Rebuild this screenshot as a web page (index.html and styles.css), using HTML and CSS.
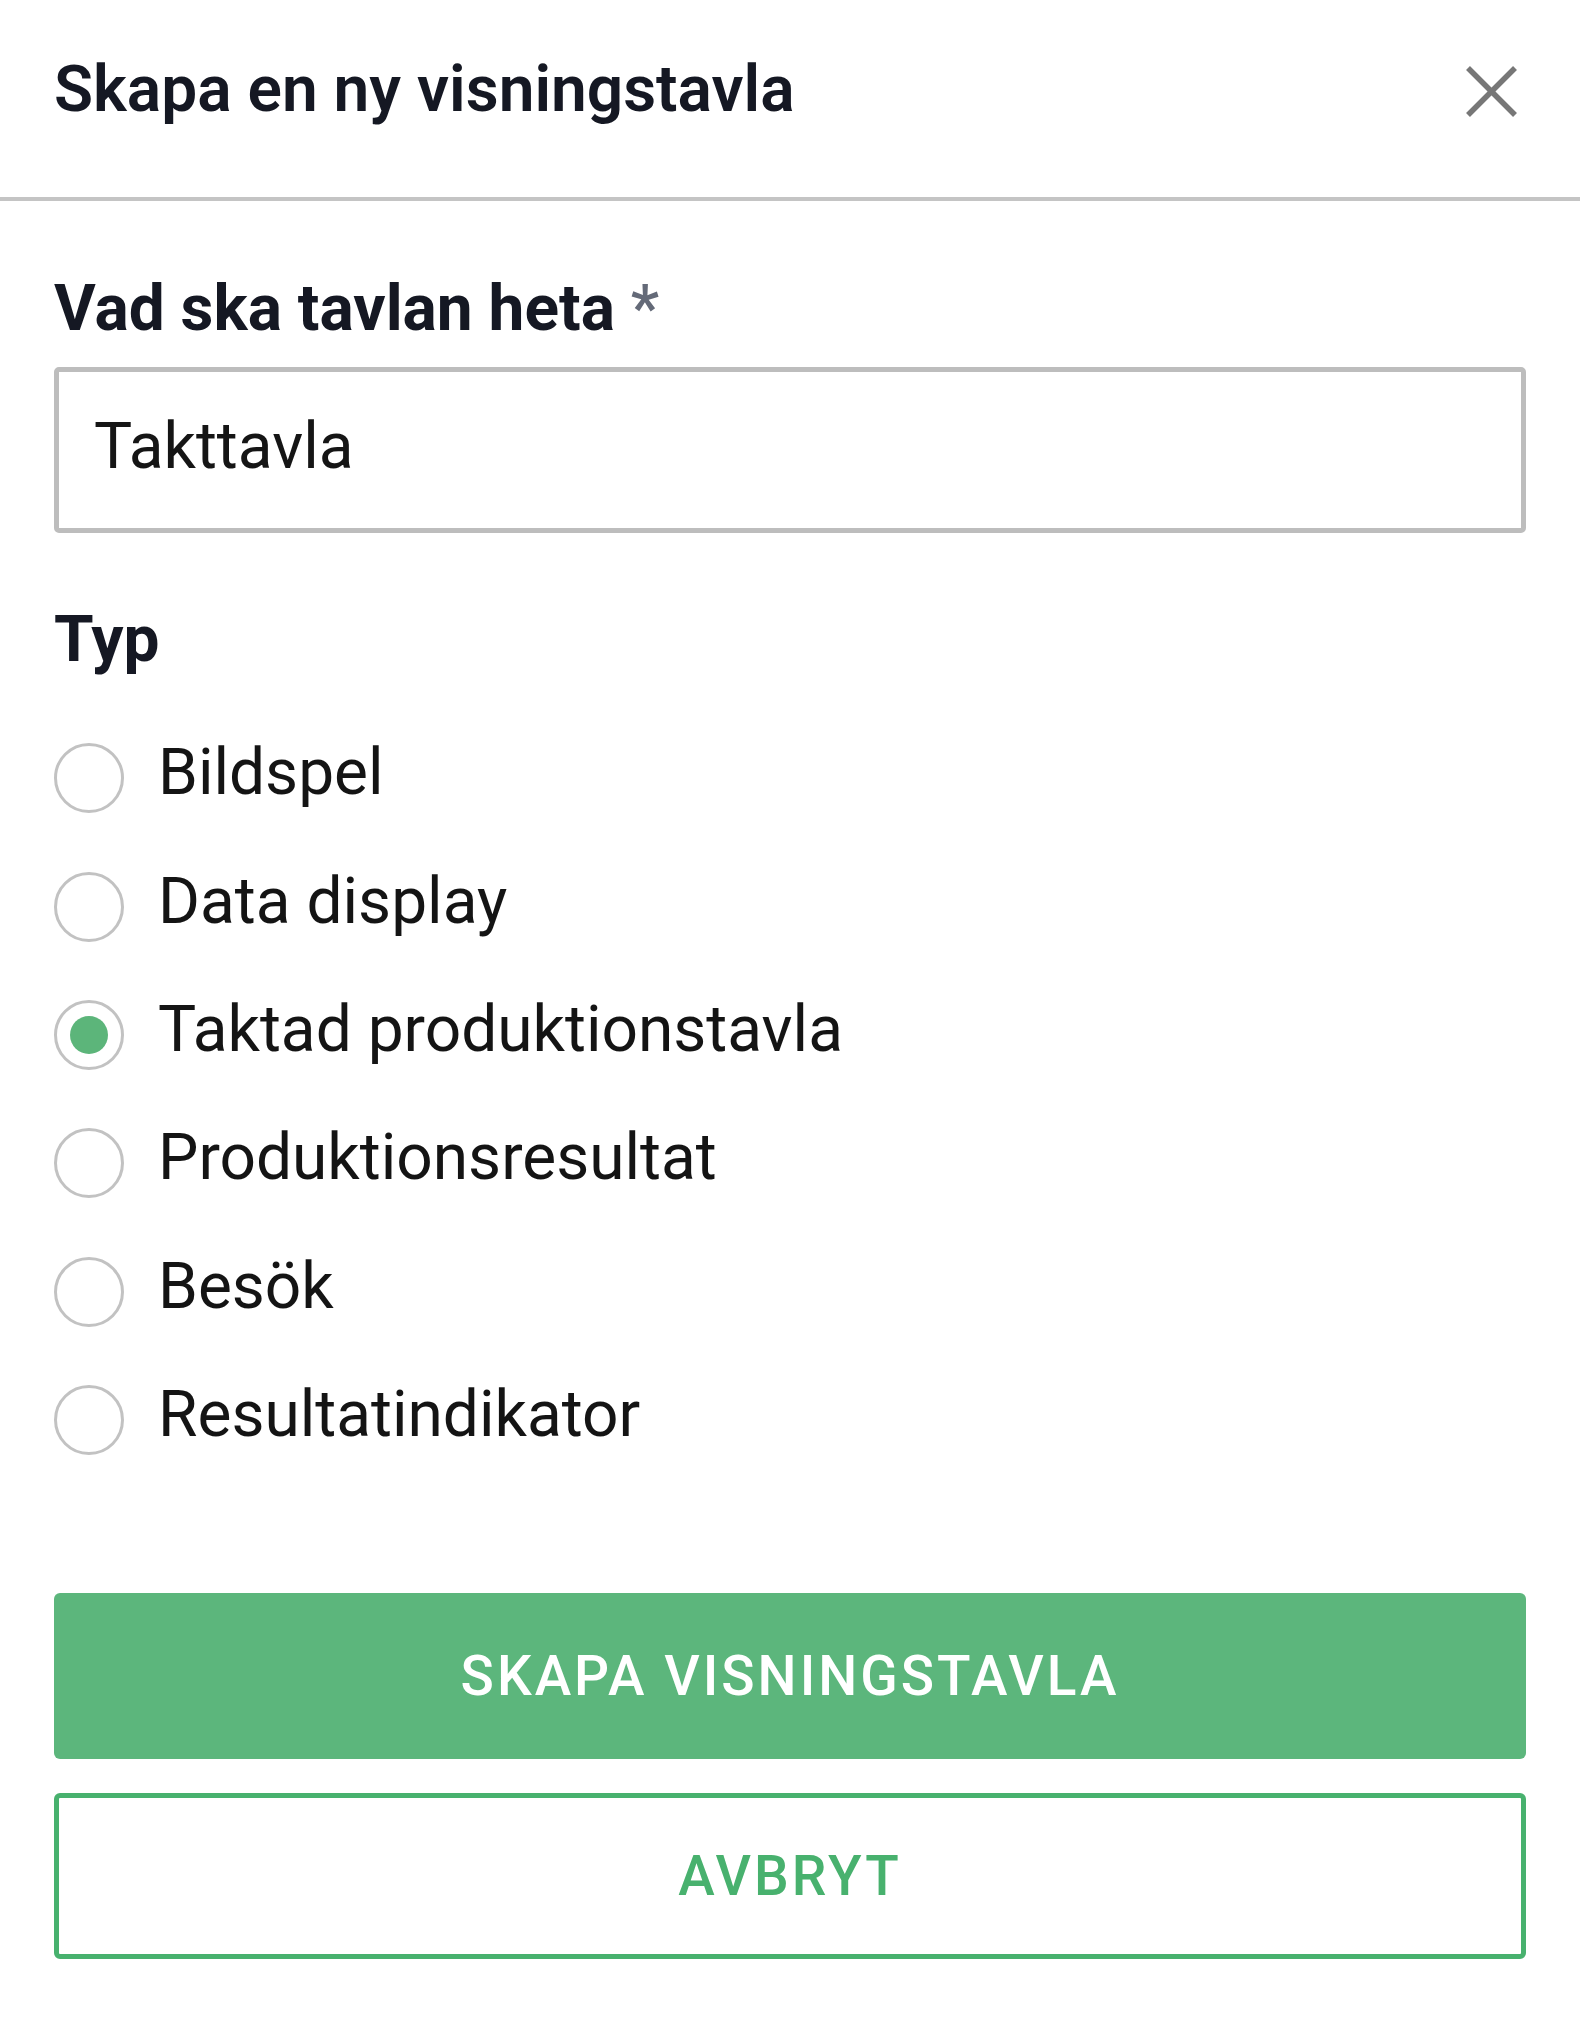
FILE: index.html
```html
<!DOCTYPE html>
<html lang="sv">
<head>
<meta charset="utf-8">
<title>Skapa en ny visningstavla</title>
<link rel="stylesheet" href="styles.css">
</head>
<body>
<div class="dialog">
  <header class="dialog-header">
    <h1 class="dialog-title">Skapa en ny visningstavla</h1>
    <button class="close-btn" type="button" aria-label="Stäng">
      <svg width="53" height="53" viewBox="0 0 53 53" aria-hidden="true">
        <line x1="3" y1="3" x2="50" y2="50" />
        <line x1="50" y1="3" x2="3" y2="50" />
      </svg>
    </button>
  </header>
  <form class="dialog-body">
    <label class="field-label" for="name">Vad ska tavlan heta <span class="required">*</span></label>
    <input class="text-input" id="name" type="text" value="Takttavla">

    <div class="section-label">Typ</div>
    <div class="radio-group">
      <label class="radio-row"><input class="radio" type="radio" name="typ"><span class="radio-text">Bildspel</span></label>
      <label class="radio-row"><input class="radio" type="radio" name="typ"><span class="radio-text">Data display</span></label>
      <label class="radio-row"><input class="radio" type="radio" name="typ" checked><span class="radio-text">Taktad produktionstavla</span></label>
      <label class="radio-row"><input class="radio" type="radio" name="typ"><span class="radio-text">Produktionsresultat</span></label>
      <label class="radio-row"><input class="radio" type="radio" name="typ"><span class="radio-text">Besök</span></label>
      <label class="radio-row"><input class="radio" type="radio" name="typ"><span class="radio-text">Resultatindikator</span></label>
    </div>

    <div class="actions">
      <button class="btn btn-primary" type="button">Skapa visningstavla</button>
      <button class="btn btn-outline" type="button">Avbryt</button>
    </div>
  </form>
</div>
</body>
</html>
```

FILE: styles.css
```css
* {
  box-sizing: border-box;
}

html, body {
  margin: 0;
  padding: 0;
  background: #ffffff;
}

body {
  font-family: Roboto, "Liberation Sans", Arial, sans-serif;
  color: #14171f;
}

.dialog {
  width: 1580px;
}

.dialog-header {
  display: flex;
  justify-content: space-between;
  align-items: flex-start;
  padding: 54px 62px 71px 54px;
  border-bottom: 4px solid #c4c4c4;
}

.dialog-title {
  margin: 0;
  font-size: 64px;
  line-height: 72px;
  font-weight: 600;
  color: #151823;
}

.close-btn {
  margin: 11px 0 0 0;
  padding: 0;
  border: 0;
  background: transparent;
  width: 53px;
  height: 53px;
  display: block;
}

.close-btn svg {
  display: block;
}

.close-btn line {
  stroke: #777777;
  stroke-width: 5.5;
}

.dialog-body {
  display: flex;
  flex-direction: column;
  padding: 70px 54px 60px 54px;
  margin: 0;
}

.field-label,
.section-label {
  display: block;
  font-size: 64px;
  line-height: 76px;
  font-weight: 700;
  color: #151823;
}

.required {
  font-weight: 500;
  color: #646a78;
}

.text-input {
  margin-top: 20px;
  width: 100%;
  height: 166px;
  border: 5px solid #bdbdbd;
  border-radius: 5px;
  padding: 0 0 8px 35px;
  font-family: Roboto, "Liberation Sans", Arial, sans-serif;
  font-size: 64px;
  font-weight: 400;
  color: #151515;
  background: #ffffff;
  outline: none;
}

.section-label {
  margin-top: 69px;
}

.radio-group {
  display: flex;
  flex-direction: column;
  margin-top: 36px;
}

.radio-row {
  display: flex;
  align-items: center;
  height: 128.4px;
  gap: 34px;
}

.radio {
  appearance: none;
  -webkit-appearance: none;
  margin: 0;
  flex: 0 0 auto;
  width: 70px;
  height: 70px;
  border: 3px solid #c2c2c2;
  border-radius: 50%;
  background: #ffffff;
  display: flex;
  align-items: center;
  justify-content: center;
}

.radio:checked::after {
  content: "";
  width: 38px;
  height: 38px;
  border-radius: 50%;
  background: #5cb57a;
}

.radio-text {
  font-size: 64px;
  line-height: 76px;
  font-weight: 400;
  color: #141414;
  padding-bottom: 10px;
}

.actions {
  display: flex;
  flex-direction: column;
  gap: 34px;
  margin-top: 109px;
}

.btn {
  width: 100%;
  height: 166px;
  border-radius: 6px;
  font-family: Roboto, "Liberation Sans", Arial, sans-serif;
  font-size: 55px;
  font-weight: 500;
  letter-spacing: 3px;
  text-transform: uppercase;
  cursor: pointer;
}

.btn-primary {
  background: #5cb67c;
  border: 0;
  color: #ffffff;
}

.btn-outline {
  background: #ffffff;
  border: 5px solid #48b16e;
  color: #48b16e;
}
```
